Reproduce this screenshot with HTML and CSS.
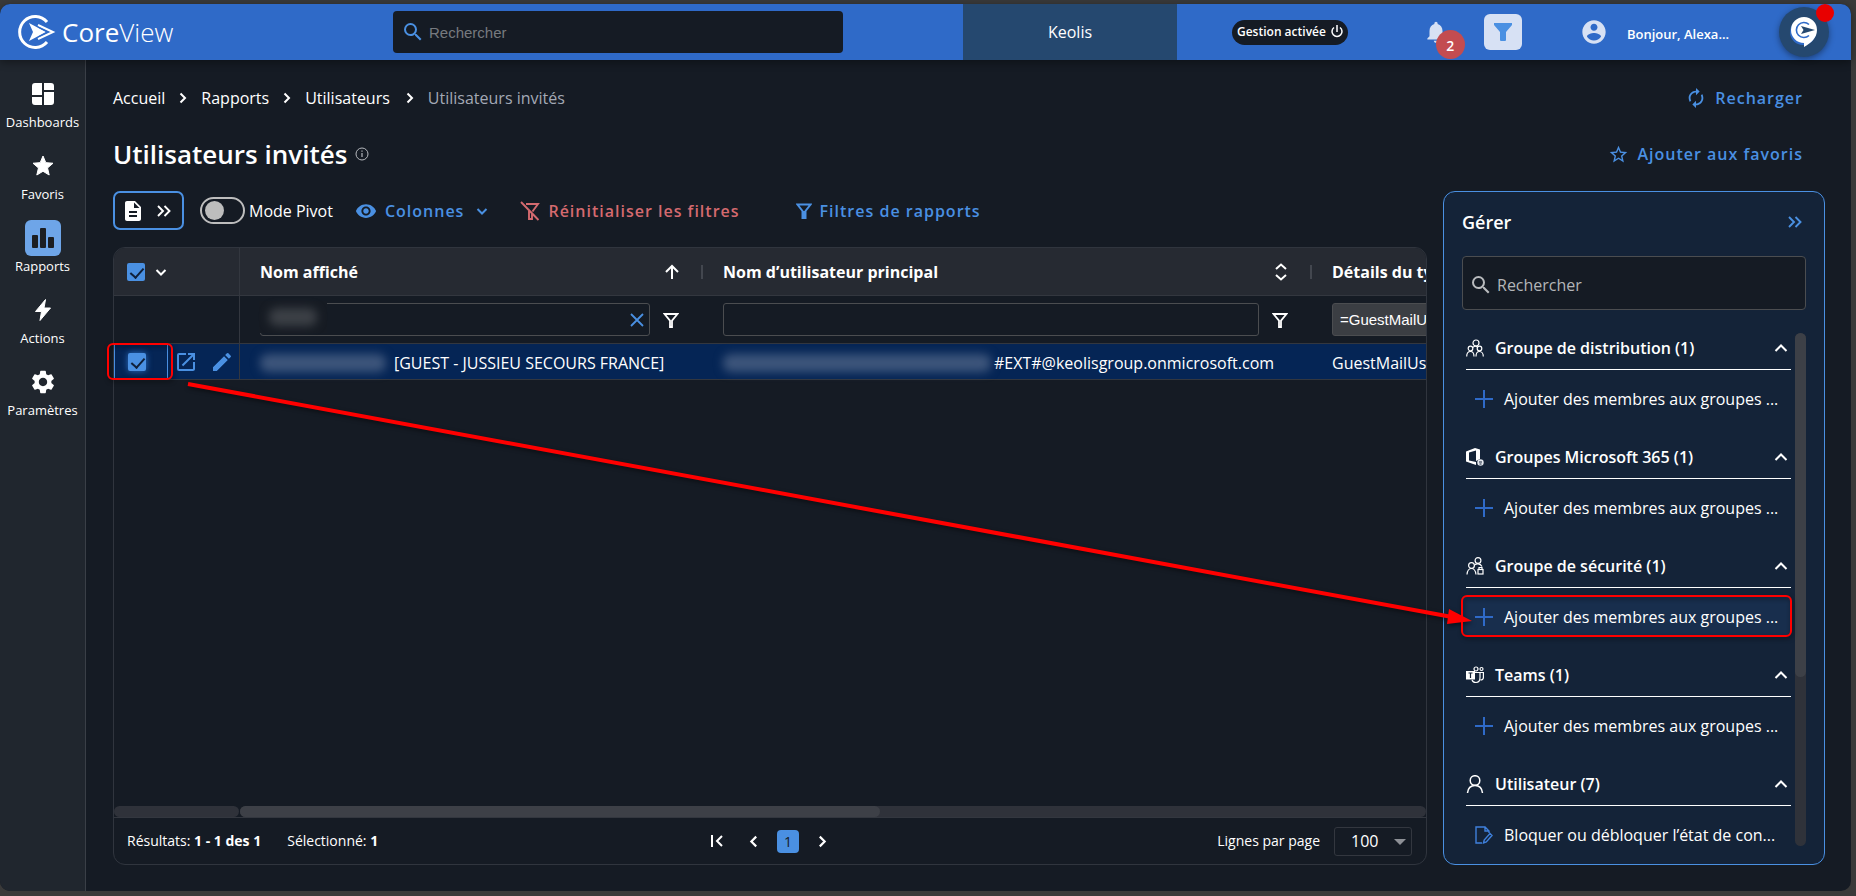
FILE: index.html
```
<!DOCTYPE html>
<html lang="fr">
  <head>
    <meta charset="UTF-8" />
    <meta name="viewport" content="width=device-width, initial-scale=1.0" />
    <title>CoreView - Utilisateurs invités</title>
    <link rel="stylesheet" href="styles.css">
  </head>
  <body>
    <!-- Icônes partagées -->
    <svg class="sprite" aria-hidden="true">
      <symbol id="i-search" viewBox="0 0 24 24"><path fill="currentColor" d="M15.500 14h-.79l-.28-.27A6.471 6.471 0 0 0 16 9.500 6.500 6.500 0 1 0 9.500 16c1.610 0 3.090-.59 4.230-1.570l.27.28v.79l5 4.990L20.490 19l-4.990-5zm-6 0C7.010 14 5 11.990 5 9.500S7.010 5 9.500 5 14 7.010 14 9.500 11.990 14 9.500 14z"/></symbol>
      <symbol id="i-right" viewBox="0 0 12 12"><path d="M3.500 1.500L8 6l-4.500 4.500" fill="none" stroke="currentColor" stroke-width="2"/></symbol>
      <symbol id="i-left" viewBox="0 0 12 12"><path d="M8.500 1.500L4 6l4.500 4.500" fill="none" stroke="currentColor" stroke-width="2"/></symbol>
      <symbol id="i-down" viewBox="0 0 12 12"><path d="M1.500 4L6 8.500 10.500 4" fill="none" stroke="currentColor" stroke-width="2"/></symbol>
      <symbol id="i-up" viewBox="0 0 14 14"><path d="M1.500 10L7 4.500l5.500 5.500" fill="none" stroke="currentColor" stroke-width="2"/></symbol>
      <symbol id="i-double" viewBox="0 0 16 16"><path d="M2 3l5 5-5 5M8.500 3l5 5-5 5" fill="none" stroke="currentColor" stroke-width="1.900"/></symbol>
      <symbol id="i-funnel" viewBox="0 0 16 16"><path d="M1.500 2h13L9 8.600V15H7V8.600z" fill="none" stroke="currentColor" stroke-width="1.800"/></symbol>
      <symbol id="i-plus" viewBox="0 0 18 18"><path d="M9 0v18M0 9h18" fill="none" stroke="currentColor" stroke-width="2"/></symbol>
    </svg>

    <div class="window">
      <header class="topbar">
        <a class="logo" href="#">
          <svg width="40" height="36" viewBox="0 0 40 36" fill="none" stroke="#fff">
            <path d="M31 8A15.500 15.500 0 1 0 31 28" stroke-width="3"/>
            <path d="M13 9l17 9-17 9 4-9z" fill="#fff" stroke="none"/>
            <path d="M22 11l15 7-15 7" stroke-width="2"/>
            <path d="M22 13l9.500 5-9.500 5" stroke="#2f6ac8" stroke-width="1.200"/>
          </svg>
          <span>Core<span class="light">View</span></span>
        </a>
        <label class="top-search">
          <svg width="24" height="24"><use href="#i-search"/></svg>
          <input type="search" placeholder="Rechercher" aria-label="Rechercher" />
        </label>
        <div class="tenant">Keolis</div>
        <div class="top-actions">
          <button class="pill">Gestion activée
            <svg width="14" height="14" viewBox="0 0 14 14" fill="none" stroke="#fff" stroke-width="1.500"><path d="M4 2.500a5 5 0 1 0 6 0M7 0v7"/></svg>
          </button>
          <button class="bell" aria-label="Notifications">
            <svg width="26" height="26" viewBox="0 0 24 24" fill="#d7e1f4"><path d="M12 22c1.100 0 2-.9 2-2h-4c0 1.100.89 2 2 2zm6-6v-5c0-3.070-1.640-5.640-4.500-6.320V4c0-.83-.67-1.500-1.500-1.500s-1.500.67-1.500 1.500v.68C7.630 5.360 6 7.920 6 11v5l-2 2v1h16v-1l-2-2z"/></svg>
            <span class="badge">2</span>
          </button>
          <button class="filter-btn" aria-label="Filtre">
            <svg width="20" height="20" viewBox="0 0 20 20"><path d="M1 1h18v2l-6 7v8q0 1-1 1H8q-1 0-1-1v-8L1 3z" fill="#4a90e2"/></svg>
          </button>
          <button class="user">
            <svg width="28" height="28" viewBox="0 0 24 24" fill="#d7e1f4"><path d="M12 2C6.480 2 2 6.480 2 12s4.480 10 10 10 10-4.480 10-10S17.520 2 12 2zm0 3c1.660 0 3 1.340 3 3s-1.340 3-3 3-3-1.340-3-3 1.340-3 3-3zm0 14.200c-2.500 0-4.710-1.280-6-3.220.03-1.990 4-3.080 6-3.080 1.990 0 5.970 1.090 6 3.080-1.290 1.940-3.500 3.220-6 3.220z"/></svg>
            <span>Bonjour, Alexa...</span>
          </button>
          <button class="assistant" aria-label="Assistant">
            <svg width="30" height="32" viewBox="0 0 30 32" fill="none">
              <circle cx="14" cy="16" r="13" fill="#2f6ac8"/>
              <path d="M15 1a13 13 0 0 1 13 13c0 8-6 13-13 17v-4A13 13 0 0 1 15 1z" fill="#fff"/>
              <path d="M20 8.500a7.500 7.500 0 1 0 0 11" stroke="#2f6ac8" stroke-width="1.600"/>
              <path d="M12 10l14 4-14 4 2.500-4z" fill="#25486f"/>
            </svg>
            <span class="dot"></span>
          </button>
        </div>
      </header>

      <div class="body">
        <nav class="sidebar">
          <a href="#">
            <span class="nav-icon"><svg width="22" height="22" viewBox="0 0 22 22" fill="#fff"><path d="M3 0h7v12H0V3q0-3 3-3zM12 0h7q3 0 3 3v4H12zM0 14h10v8H3q-3 0-3-3zM12 9h10v10q0 3-3 3h-7z"/></svg></span>
            Dashboards
          </a>
          <a href="#">
            <span class="nav-icon"><svg width="24" height="24" viewBox="0 0 24 24" fill="#fff" stroke="#fff" stroke-linejoin="round"><path d="M12 17.270L18.180 21l-1.640-7.030L22 9.240l-7.190-.61L12 2 9.190 8.630 2 9.240l5.460 4.730L5.820 21z"/></svg></span>
            Favoris
          </a>
          <a href="#">
            <span class="nav-icon active"><svg width="24" height="24" viewBox="0 0 24 24" fill="#1c1e22"><rect x="1" y="9" width="6" height="13" rx="1"/><rect x="9" y="2" width="6" height="20" rx="1"/><rect x="17" y="11" width="6" height="11" rx="1"/></svg></span>
            Rapports
          </a>
          <a href="#">
            <span class="nav-icon"><svg width="24" height="24" viewBox="0 0 24 24" fill="#fff" stroke="#fff" stroke-linejoin="round"><path d="M14.500 1.500L4.500 13.500h6l-1.500 9 10.500-12.500h-6.500z"/></svg></span>
            Actions
          </a>
          <a href="#">
            <span class="nav-icon"><svg width="28" height="28" viewBox="0 0 24 24" fill="#fff"><path d="M19.140 12.940c.04-.3.06-.61.06-.94 0-.32-.02-.64-.07-.94l2.030-1.580c.18-.14.23-.41.12-.61l-1.920-3.320c-.12-.22-.37-.29-.59-.22l-2.390.96c-.5-.38-1.030-.7-1.620-.94l-.36-2.540c-.04-.24-.24-.41-.48-.41h-3.840c-.24 0-.43.17-.47.41l-.36 2.540c-.59.24-1.130.57-1.620.94l-2.390-.96c-.22-.08-.47 0-.59.22L2.740 8.870c-.12.21-.08.47.12.61l2.030 1.580c-.05.3-.09.63-.09.94s.02.64.07.94l-2.030 1.580c-.18.14-.23.41-.12.61l1.920 3.320c.12.22.37.29.59.22l2.390-.96c.5.38 1.030.7 1.620.94l.36 2.540c.05.24.24.41.48.41h3.840c.24 0 .44-.17.47-.41l.36-2.540c.59-.24 1.130-.56 1.620-.94l2.390.96c.22.08.47 0 .59-.22l1.920-3.320c.12-.22.07-.47-.12-.61l-2.010-1.580zM12 15.600c-1.980 0-3.600-1.620-3.600-3.600s1.620-3.600 3.600-3.600 3.600 1.620 3.600 3.600-1.620 3.600-3.600 3.600z"/></svg></span>
            Paramètres
          </a>
        </nav>

        <main class="main">
          <div class="head-row">
            <nav class="breadcrumb">
              <a href="#">Accueil</a>
              <svg width="12" height="12"><use href="#i-right"/></svg>
              <a href="#">Rapports</a>
              <svg width="12" height="12"><use href="#i-right"/></svg>
              <a href="#">Utilisateurs</a>
              <svg class="last" width="12" height="12"><use href="#i-right"/></svg>
              <span>Utilisateurs invités</span>
            </nav>
            <button class="action">
              <svg width="22" height="22" viewBox="0 0 24 24" fill="currentColor"><path d="M12 6v3l4-4-4-4v3c-4.420 0-8 3.580-8 8 0 1.570.46 3.030 1.240 4.260L6.700 14.800c-.45-.83-.7-1.790-.7-2.800 0-3.310 2.690-6 6-6zm6.760 1.740L17.300 9.200c.44.84.7 1.790.7 2.800 0 3.310-2.690 6-6 6v-3l-4 4 4 4v-3c4.420 0 8-3.580 8-8 0-1.570-.46-3.030-1.240-4.260z"/></svg>
              Recharger
            </button>
          </div>
          <div class="head-row">
            <h1>Utilisateurs invités
              <svg width="14" height="14" viewBox="0 0 14 14" fill="none" stroke="#b5b8bd"><circle cx="7" cy="7" r="6"/><path d="M7 6v4M7 3.500v1.200" stroke-width="1.200"/></svg>
            </h1>
            <button class="action">
              <svg width="21" height="21" viewBox="0 0 24 24" fill="currentColor"><path d="M22 9.240l-7.190-.62L12 2 9.190 8.630 2 9.240l5.460 4.730L5.820 21 12 17.270 18.180 21l-1.630-7.030L22 9.240zM12 15.400l-3.760 2.270 1-4.280-3.320-2.880 4.380-.38L12 6.100l1.710 4.040 4.380.38-3.320 2.880 1 4.280L12 15.400z"/></svg>
              Ajouter aux favoris
            </button>
          </div>

          <div class="content">
            <section class="report">
              <div class="toolbar">
                <button class="export" aria-label="Exporter">
                  <svg width="16" height="20" viewBox="4 2 16 20" fill="#fff"><path d="M14 2H6c-1.100 0-1.990.9-1.990 2L4 20c0 1.100.89 2 1.990 2H18c1.100 0 2-.9 2-2V8l-6-6zm2 16H8v-2h8v2zm0-4H8v-2h8v2zm-3-5V3.500L18.500 9H13z"/></svg>
                  <svg width="16" height="16"><use href="#i-double"/></svg>
                </button>
                <label class="pivot"><input type="checkbox" />Mode Pivot</label>
                <button class="action columns">
                  <svg width="22" height="22" viewBox="0 0 24 24" fill="currentColor"><path d="M12 4.500C7 4.500 2.730 7.610 1 12c1.730 4.390 6 7.500 11 7.500s9.270-3.110 11-7.500c-1.730-4.390-6-7.500-11-7.500zM12 17c-2.760 0-5-2.240-5-5s2.240-5 5-5 5 2.240 5 5-2.240 5-5 5zm0-8c-1.660 0-3 1.340-3 3s1.340 3 3 3 3-1.340 3-3-1.340-3-3-3z"/></svg>
                  Colonnes
                  <svg class="caret" width="12" height="12"><use href="#i-down"/></svg>
                </button>
                <button class="action reset">
                  <svg width="20" height="20" viewBox="0 0 20 20" fill="none" stroke="currentColor" stroke-width="1.900"><path d="M1 1l17.500 18M6 3h12l-5.500 7.500M9 10v8h3v-5"/></svg>
                  Réinitialiser les filtres
                </button>
                <button class="action">
                  <svg width="16" height="16" viewBox="0 0 16 16" fill="none" stroke="currentColor" stroke-width="2"><path d="M1.500 1.500h13L9.500 8v7h-3V8zM8 8v7"/></svg>
                  Filtres de rapports
                </button>
              </div>

              <div class="grid">
                <div class="grid-scroll">
                  <table>
                    <colgroup>
                      <col class="c-tools" />
                      <col class="c-name" />
                      <col class="c-upn" />
                      <col class="c-type" />
                    </colgroup>
                    <thead>
                      <tr>
                        <th class="tools">
                          <div class="cell">
                            <input type="checkbox" class="check" checked aria-label="Tout sélectionner" />
                            <svg width="12" height="12"><use href="#i-down"/></svg>
                          </div>
                        </th>
                        <th>
                          <div class="cell">Nom affiché
                            <svg class="sort" width="16" height="16" viewBox="0 0 16 16" fill="none" stroke="#fff" stroke-width="2"><path d="M8 15V2M2 8l6-6 6 6"/></svg>
                          </div>
                        </th>
                        <th>
                          <div class="cell">Nom d’utilisateur principal
                            <svg class="sort" width="16" height="18" viewBox="0 0 16 18" fill="none" stroke="#fff" stroke-width="2"><path d="M3 6l5-4.500L13 6M3 12l5 4.500L13 12"/></svg>
                          </div>
                        </th>
                        <th><div class="cell">Détails du type</div></th>
                      </tr>
                      <tr class="filters">
                        <td class="tools"></td>
                        <td>
                          <div class="cell">
                            <div class="field">
                              <input type="text" aria-label="Filtrer par nom affiché" />
                              <span class="masked-field"><span class="masked"></span></span>
                              <button aria-label="Effacer"><svg width="14" height="14" viewBox="0 0 14 14" stroke="#4a90e2" stroke-width="1.800"><path d="M1 1l12 12M13 1L1 13"/></svg></button>
                            </div>
                            <svg width="16" height="16"><use href="#i-funnel"/></svg>
                          </div>
                        </td>
                        <td>
                          <div class="cell">
                            <div class="field"><input type="text" aria-label="Filtrer par nom principal" /></div>
                            <svg width="16" height="16"><use href="#i-funnel"/></svg>
                          </div>
                        </td>
                        <td>
                          <div class="cell">
                            <div class="field filled"><input type="text" value="=GuestMailUser" aria-label="Filtrer par type" /></div>
                          </div>
                        </td>
                      </tr>
                    </thead>
                    <tbody>
                      <tr>
                        <td class="tools">
                          <div class="cell">
                            <span class="check-cell"><input type="checkbox" class="check glow" checked aria-label="Sélectionner la ligne" /></span>
                            <a href="#" aria-label="Ouvrir"><svg width="24" height="24" viewBox="0 0 24 24" fill="#4a90e2"><path d="M19 19H5V5h7V3H5a2 2 0 0 0-2 2v14a2 2 0 0 0 2 2h14c1.100 0 2-.9 2-2v-7h-2v7zM14 3v2h3.590l-9.830 9.830 1.410 1.410L19 6.410V10h2V3h-7z"/></svg></a>
                            <a href="#" aria-label="Modifier"><svg width="24" height="24" viewBox="0 0 24 24" fill="#4a90e2"><path d="M3 17.250V21h3.750L17.810 9.940l-3.750-3.750L3 17.250zM20.710 7.040a1 1 0 0 0 0-1.410l-2.340-2.340a1 1 0 0 0-1.410 0l-1.830 1.830 3.750 3.750 1.830-1.830z"/></svg></a>
                          </div>
                        </td>
                        <td><div class="cell"><span class="masked masked-name"></span>[GUEST - JUSSIEU SECOURS FRANCE]</div></td>
                        <td><div class="cell"><span class="masked masked-upn"></span>#EXT#@keolisgroup.onmicrosoft.com</div></td>
                        <td><div class="cell">GuestMailUser</div></td>
                      </tr>
                    </tbody>
                  </table>
                </div>
                <div class="hscroll">
                  <span class="track-left"></span>
                  <span class="track"><span class="thumb"></span></span>
                </div>
                <footer class="grid-footer">
                  <div class="counts">
                    <span>Résultats: <b>1 - 1 des 1</b></span>
                    <span>Sélectionné: <b>1</b></span>
                  </div>
                  <div class="pager">
                    <button class="first" aria-label="Première page"><svg width="14" height="14" viewBox="0 0 14 14" fill="none" stroke="#fff" stroke-width="2"><path d="M2 1v12M12 2L7 7l5 5"/></svg></button>
                    <button aria-label="Page précédente"><svg width="13" height="13"><use href="#i-left"/></svg></button>
                    <button class="current">1</button>
                    <button aria-label="Page suivante"><svg width="13" height="13"><use href="#i-right"/></svg></button>
                  </div>
                  <div class="page-size">
                    <label for="page-size">Lignes par page</label>
                    <div class="select">
                      <select id="page-size"><option>100</option></select>
                    </div>
                  </div>
                </footer>
              </div>
            </section>

            <aside class="manage">
              <div class="manage-head">
                <h2>Gérer</h2>
                <button aria-label="Réduire"><svg width="16" height="16"><use href="#i-double"/></svg></button>
              </div>
              <label class="manage-search">
                <svg width="24" height="24"><use href="#i-search"/></svg>
                <input type="search" placeholder="Rechercher" aria-label="Rechercher une action" />
              </label>
              <div class="manage-body">
                <div class="groups">
                  <section>
                    <h3>
                      <svg width="18" height="18" viewBox="0 0 18 18" fill="none" stroke="#fff" stroke-width="1.200"><circle cx="10" cy="4" r="3"/><circle cx="4.500" cy="9.500" r="2.300"/><circle cx="13.500" cy="9.500" r="2.300"/><path d="M.7 17.500c0-3 1.500-5 3.800-5s3.500 2 3.500 5M10 17.500c0-3 1.500-5 3.500-5s3.800 2 3.800 5M7 8.500c1-1.300 3-1.500 4.500-.5"/></svg>
                      Groupe de distribution (1)
                      <svg class="fold" width="14" height="14"><use href="#i-up"/></svg>
                    </h3>
                    <button class="item"><svg width="18" height="18"><use href="#i-plus"/></svg>Ajouter des membres aux groupes ...</button>
                  </section>
                  <section>
                    <h3>
                      <svg width="18" height="18" viewBox="0 0 18 18"><path d="M0 3.500L9 0l5 1.500V11l-4 2V2.500L3 4.500v8l7 1.500v3L0 13.500z" fill="#fff"/><circle cx="14.500" cy="14.500" r="3.200" fill="#e4e8ee"/><path d="M13 14h3M13.500 16h2" stroke="#142338"/></svg>
                      Groupes Microsoft 365 (1)
                      <svg class="fold" width="14" height="14"><use href="#i-up"/></svg>
                    </h3>
                    <button class="item"><svg width="18" height="18"><use href="#i-plus"/></svg>Ajouter des membres aux groupes ...</button>
                  </section>
                  <section>
                    <h3>
                      <svg width="18" height="18" viewBox="0 0 18 18" fill="none" stroke="#fff" stroke-width="1.200"><circle cx="12" cy="3.500" r="2.900"/><circle cx="5.500" cy="8.500" r="2.900"/><path d="M1 17.500c.3-3.500 2-6 4.500-6s4 2 4.500 6M9 8c1-1.500 5-2 7 1.500"/><path d="M13 12.500v-2h3v2"/><rect x="12" y="12.500" width="5" height="4.500"/></svg>
                      Groupe de sécurité (1)
                      <svg class="fold" width="14" height="14"><use href="#i-up"/></svg>
                    </h3>
                    <button class="item hover"><svg width="18" height="18"><use href="#i-plus"/></svg>Ajouter des membres aux groupes ...</button>
                  </section>
                  <section>
                    <h3>
                      <svg width="18" height="18" viewBox="0 0 18 18" fill="none" stroke="#fff" stroke-width="1.200"><circle cx="10" cy="3" r="2"/><circle cx="15.500" cy="3" r="1.500"/><path d="M9 6.500h5v5c0 3-1.500 5-4 5-2 0-3.500-1-4-2.500M14 6.500h3.400v5c0 2-1.400 2.500-3 2.500"/><rect x="0" y="5" width="9" height="8.500" fill="#fff" stroke="none"/><path d="M2.500 7h4M4.500 7v5" stroke="#142338"/></svg>
                      Teams (1)
                      <svg class="fold" width="14" height="14"><use href="#i-up"/></svg>
                    </h3>
                    <button class="item"><svg width="18" height="18"><use href="#i-plus"/></svg>Ajouter des membres aux groupes ...</button>
                  </section>
                  <section>
                    <h3>
                      <svg width="18" height="18" viewBox="0 0 18 18" fill="none" stroke="#fff" stroke-width="1.500"><circle cx="9" cy="5.500" r="4.800"/><path d="M1.500 18c.5-5 3-7.500 7.500-7.500s7 2.500 7.500 7.500"/></svg>
                      Utilisateur (7)
                      <svg class="fold" width="14" height="14"><use href="#i-up"/></svg>
                    </h3>
                    <button class="item"><svg width="18" height="18" viewBox="0 0 18 18" fill="none" stroke="#3f80dc" stroke-width="1.400"><path d="M7 17H1V1h9l4 4v2M10 1v4h4M8.500 17l.7-3L15 7.500l2 2-5.700 6.500z"/></svg>Bloquer ou débloquer l’état de con...</button>
                  </section>
                </div>
                <div class="vscroll"><span></span></div>
              </div>
            </aside>
          </div>
        </main>
      </div>

      <!-- Annotations rouges posées sur la page -->
      <svg class="annotations" aria-hidden="true" fill="none" stroke="#f00">
        <rect x="108" y="340" width="64" height="35" rx="5" stroke-width="2"/>
        <rect x="1462" y="592" width="329" height="40" rx="5" stroke-width="2"/>
        <path d="M188 380L1452 613" stroke-width="4"/>
        <path d="M1449 605l23 12-25 3z" fill="#f00" stroke="none"/>
      </svg>
    </div>
  </body>
</html>
```
FILE: styles.css
```
* {
  box-sizing: border-box;
}
body {
  margin: 0;
  height: 100vh;
  padding: 4px 5px 5px 0;
  background-color: #3a3a3a;
  color: #fff;
  font-family: "Open Sans", "Noto Sans", sans-serif;
  font-size: 16px;
  line-height: 24px;
}
a {
  color: inherit;
  text-decoration: none;
}
button {
  padding: 0;
  border: 0;
  background: none;
  color: inherit;
  font: inherit;
}
input,
select {
  border: 0;
  outline: 0;
  background: none;
  color: inherit;
}
svg {
  display: block;
  flex: none;
}
.sprite {
  position: absolute;
  width: 0;
  height: 0;
}
.window {
  position: relative;
  display: flex;
  flex-direction: column;
  height: 100%;
  border-radius: 10px;
  background-color: #151b24;
}

/* Barre supérieure */
.topbar {
  position: relative;
  display: grid;
  grid-template-columns: 393px 450px 120px 214px 1fr;
  height: 56px;
  flex: none;
  border-radius: 10px 10px 0 0;
  background-color: #2f6ac8;
  box-shadow: 0 2px 8px rgba(0, 0, 0, 0.4);
}
.logo {
  display: flex;
  align-items: center;
  gap: 6px;
  padding-left: 16px;
  font-size: 26px;
}
.light {
  font-weight: 300;
}
.top-search {
  display: flex;
  align-items: center;
  gap: 2px;
  height: 42px;
  margin-top: 7px;
  padding-left: 8px;
  border-radius: 4px;
  background-color: #151b24;
  color: #4a90e2;
}
.top-search input {
  flex: 1;
  font: 15px "Liberation Sans", Arial, sans-serif;
}
.top-search input::placeholder {
  color: #777a7f;
}
.tenant {
  grid-column: 4;
  background-color: #25486f;
  line-height: 56px;
  text-align: center;
}
.top-actions {
  display: flex;
  align-items: center;
  padding: 0 22px 0 55px;
}
.pill {
  display: flex;
  align-items: center;
  gap: 4px;
  height: 25px;
  padding: 0 4px 0 5px;
  border-radius: 13px;
  background-color: #151b24;
  font-size: 12px;
  font-weight: 600;
  white-space: nowrap;
}
.bell {
  position: relative;
  margin-left: 75px;
}
.badge {
  position: absolute;
  top: 11px;
  left: 13px;
  width: 29px;
  height: 29px;
  border-radius: 50%;
  background-color: #c34c50;
  font-size: 14px;
  font-weight: 600;
  line-height: 32px;
}
.filter-btn {
  display: grid;
  place-items: center;
  width: 38px;
  height: 36px;
  margin-left: 35px;
  border-radius: 6px;
  background-color: #d7e1f4;
}
.user {
  display: flex;
  align-items: center;
  gap: 19px;
  margin-left: 58px;
  font-size: 13px;
  font-weight: 600;
}
.user span {
  padding-top: 4px;
}
.assistant {
  position: relative;
  display: grid;
  place-items: center;
  width: 50px;
  height: 50px;
  margin-left: auto;
  border-radius: 50%;
  background-color: #25486f;
  box-shadow: 0 2px 6px rgba(0, 0, 0, 0.4);
}
.dot {
  position: absolute;
  top: -3px;
  right: -5px;
  width: 18px;
  height: 18px;
  border-radius: 50%;
  background-color: #e80000;
}

/* Menu latéral */
.body {
  display: flex;
  flex: 1;
  min-height: 0;
}
.sidebar {
  display: flex;
  flex-direction: column;
  gap: 12px;
  width: 86px;
  padding-top: 16px;
  border-right: 1px solid #3a3f47;
  border-radius: 0 0 0 10px;
  background-color: #20262e;
}
.sidebar a {
  display: flex;
  flex-direction: column;
  align-items: center;
  height: 60px;
  font-size: 13px;
  line-height: 20px;
}
.nav-icon {
  display: grid;
  place-items: center;
  width: 36px;
  height: 36px;
  border-radius: 6px;
}
.nav-icon.active {
  background-color: #6ea5e8;
}

/* En-tête de page */
.main {
  display: flex;
  flex: 1;
  flex-direction: column;
  gap: 18px;
  min-width: 0;
  padding: 19px 26px 26px 27px;
}
.head-row {
  display: flex;
  align-items: center;
  justify-content: space-between;
  height: 38px;
  flex: none;
  padding-right: 22px;
}
.breadcrumb {
  display: flex;
  align-items: center;
  gap: 12px;
}
.breadcrumb .last {
  margin-left: 2px;
}
.breadcrumb span {
  color: #a3a9b5;
}
h1 {
  display: flex;
  align-items: center;
  gap: 8px;
  margin: 0;
  font-size: 26px;
  font-weight: 600;
}
.action {
  display: flex;
  align-items: center;
  gap: 8px;
  color: #4a90e2;
  font-weight: 600;
  letter-spacing: 1px;
  white-space: nowrap;
}

.content {
  display: grid;
  flex: 1;
  grid-template-columns: minmax(0, 1fr) 382px;
  gap: 16px;
  min-height: 0;
}
.report {
  display: flex;
  flex-direction: column;
  gap: 17px;
  min-height: 0;
}
.toolbar {
  display: flex;
  align-items: center;
  height: 39px;
  flex: none;
}
.toolbar .columns {
  margin: 0 32px 0 22px;
}
.caret {
  margin-left: 4px;
}
.toolbar .reset {
  margin-right: 56px;
  color: #d46a6f;
}
.export {
  display: flex;
  align-items: center;
  justify-content: center;
  gap: 15px;
  width: 71px;
  height: 39px;
  border: 2px solid #4a90e2;
  border-radius: 7px;
}
.pivot {
  display: flex;
  align-items: center;
  gap: 4px;
  margin-left: 16px;
}
.pivot input {
  appearance: none;
  width: 45px;
  height: 27px;
  margin: 0;
  padding: 2px;
  border: 2px solid #bdbdbd;
  border-radius: 14px;
}
.pivot input::before {
  content: "";
  display: block;
  width: 19px;
  height: 19px;
  margin-left: 1px;
  border-radius: 50%;
  background-color: #bdbdbd;
}

/* Tableau */
.grid {
  display: flex;
  flex: 1;
  flex-direction: column;
  min-height: 0;
  border: 1px solid #30353e;
  border-radius: 12px;
  overflow: hidden;
}
.grid-scroll {
  flex: 1;
  overflow: hidden;
}
table {
  width: 1498px;
  table-layout: fixed;
  border-spacing: 0;
}
.c-tools {
  width: 126px;
}
.c-name {
  width: 463px;
}
.c-upn {
  width: 609px;
}
th,
td {
  height: 48px;
  padding: 0 20px;
  border-bottom: 1px solid #33373f;
  text-align: left;
}
th {
  position: relative;
  background-color: #262a32;
  font-weight: 700;
}
th + th:not(:last-child)::after {
  content: "";
  position: absolute;
  top: 17px;
  right: 0;
  width: 2px;
  height: 14px;
  background-color: #43474f;
}
.cell {
  display: flex;
  align-items: center;
  white-space: nowrap;
}
.tools {
  padding: 0;
  border-right: 1px solid #33373f;
}
th.tools .cell {
  gap: 10px;
  padding-left: 13px;
}
.sort {
  margin: 0 3px 0 auto;
}
.check {
  position: relative;
  appearance: none;
  width: 18px;
  height: 18px;
  margin: 0;
  border-radius: 2px;
  background-color: #4a90e2;
}
.check::after {
  content: "";
  position: absolute;
  top: 2px;
  left: 6px;
  width: 6px;
  height: 11px;
  border: solid #10203a;
  border-width: 0 2px 2px 0;
  transform: rotate(42deg);
}
.glow {
  box-shadow: 0 0 6px #2c6fc4;
}
.filters .cell {
  gap: 13px;
}
.filters td {
  padding-right: 24px;
}
.filters svg {
  color: #fff;
}
.field {
  position: relative;
  display: flex;
  flex: 1;
  align-items: center;
  height: 33px;
  padding: 0 5px 0 7px;
  border: 1px solid #4b4d50;
  border-radius: 3px;
}
.field input {
  flex: 1;
  min-width: 0;
  padding: 0;
  font: 15px "Liberation Sans", Arial, sans-serif;
}
.filled {
  background-color: #3b3e43;
}
tbody td {
  height: 36px;
  background-color: #052555;
}
tbody td + td .cell {
  padding-top: 2px;
}
.check-cell {
  display: flex;
  align-items: center;
  width: 54px;
  height: 35px;
  padding-left: 13px;
  border: solid #4a90e2;
  border-width: 0 1px;
}
tbody .tools .cell a {
  margin-left: 6px;
}
tbody .tools .cell a + a {
  margin-left: 12px;
}

/* Valeurs masquées */
.masked {
  height: 18px;
  border-radius: 8px;
  background-color: #3d557b;
  filter: blur(5px);
}
.masked-name {
  width: 126px;
  margin-right: 8px;
}
.masked-upn {
  width: 268px;
  margin-right: 3px;
}
/* le cache déborde sur le coin du champ */
.masked-field {
  position: absolute;
  top: -3px;
  left: -2px;
  display: flex;
  align-items: center;
  justify-content: center;
  width: 68px;
  height: 32px;
  background-color: #161b23;
}
.masked-field .masked {
  width: 48px;
  background-color: #3c4046;
}

.hscroll {
  display: flex;
  gap: 1px;
  height: 12px;
  border-bottom: 1px solid #33373f;
}
.track-left,
.track {
  width: 125px;
  border-radius: 6px;
  background-color: #2f323a;
}
.track {
  flex: 1;
}
.thumb {
  display: block;
  width: 54%;
  height: 100%;
  border-radius: 6px;
  background-color: #3d4047;
}
.grid-footer {
  display: grid;
  grid-template-columns: 1fr auto 1fr;
  align-items: center;
  height: 46px;
  padding: 0 14px 0 13px;
  font-size: 14px;
}
.counts {
  display: flex;
  gap: 26px;
}
.pager {
  display: flex;
  align-items: center;
  gap: 17px;
}
.first {
  margin-right: 6px;
}
.current {
  width: 22px;
  height: 23px;
  border-radius: 4px;
  background-color: #4a90e2;
  color: #151b24;
}
.page-size {
  display: flex;
  align-items: center;
  justify-content: flex-end;
  gap: 14px;
}
.select {
  position: relative;
}
.select::after {
  content: "";
  position: absolute;
  top: 12px;
  right: 6px;
  border: solid transparent;
  border-width: 6px 6px 0;
  border-top-color: #8d9096;
}
.select select {
  appearance: none;
  width: 78px;
  height: 29px;
  padding: 0 16px;
  border: 1px solid #33373f;
  border-radius: 3px;
  font: 16px "Open Sans", "Noto Sans", sans-serif;
}

/* Panneau Gérer */
.manage {
  display: flex;
  flex-direction: column;
  min-height: 0;
  padding: 16px 18px 18px;
  border: 1px solid #4a90e2;
  border-radius: 12px;
  background-color: #142338;
}
.manage-head {
  display: flex;
  align-items: center;
  justify-content: space-between;
  height: 28px;
  flex: none;
  padding-right: 3px;
  color: #4a90e2;
}
h2 {
  margin: 0;
  color: #fff;
  font-size: 18px;
  font-weight: 600;
}
.manage-search {
  display: flex;
  align-items: center;
  gap: 2px;
  height: 54px;
  flex: none;
  margin: 20px 0 23px;
  padding: 4px 0 0 6px;
  border: 1px solid #4b4d50;
  border-radius: 4px;
  background-color: #151b24;
  color: #b9bbbe;
}
.manage-search input {
  flex: 1;
  font: 16px "Open Sans", "Noto Sans", sans-serif;
}
.manage-search input::placeholder {
  color: #b3b5b8;
}
.manage-body {
  display: flex;
  flex: 1;
  gap: 4px;
  min-height: 0;
}
.groups {
  flex: 1;
  overflow: hidden;
}
.groups section {
  margin-bottom: 24px;
}
h3 {
  display: flex;
  align-items: center;
  gap: 11px;
  height: 37px;
  margin: 0 0 8px 4px;
  padding-bottom: 6px;
  border-bottom: 1px solid #fff;
  font-size: 16px;
  font-weight: 600;
}
.fold {
  margin: 0 3px 0 auto;
}
.item {
  display: flex;
  align-items: center;
  gap: 11px;
  width: 100%;
  height: 40px;
  padding: 2px 0 0 13px;
  border-radius: 6px;
  white-space: nowrap;
}
.item svg {
  color: #2f6ac8;
}
.item.hover {
  background-color: #182e4d;
}
.vscroll {
  width: 11px;
  border-radius: 6px;
  background-color: #2f323a;
}
.vscroll span {
  display: block;
  height: 67%;
  border-radius: 6px;
  background-color: #3d4047;
}

.annotations {
  position: absolute;
  top: 0;
  left: 0;
  width: 100%;
  height: 100%;
  pointer-events: none;
  filter: drop-shadow(1px 2px 2px rgba(0, 0, 0, 0.5));
}
```
